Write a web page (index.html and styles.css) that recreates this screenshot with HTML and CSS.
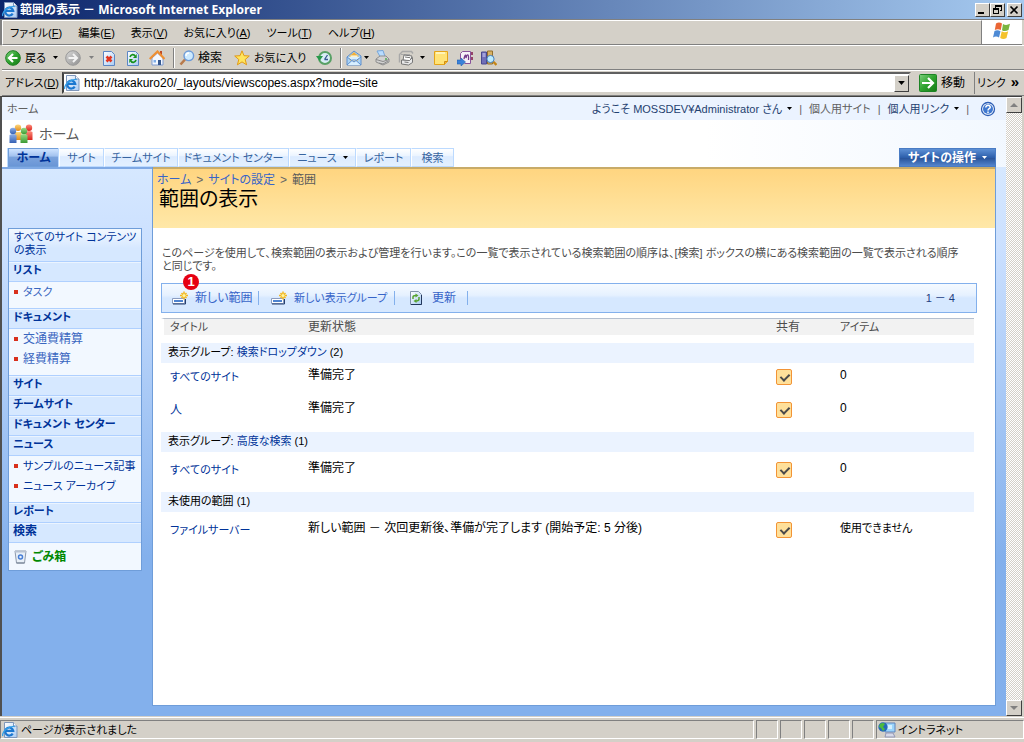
FILE: index.html
```html
<!DOCTYPE html>
<html lang="ja">
<head>
<meta charset="utf-8">
<title>範囲の表示 - Microsoft Internet Explorer</title>
<link rel="stylesheet" href="styles.css">
</head>
<body>
<svg class="defs" aria-hidden="true">
  <defs>
    <linearGradient id="gGreen" x1="0" y1="0" x2="1" y2="1"><stop offset="0" stop-color="#7fd07f"/><stop offset=".5" stop-color="#2ea32e"/><stop offset="1" stop-color="#167a16"/></linearGradient>
    <linearGradient id="gGray" x1="0" y1="0" x2="1" y2="1"><stop offset="0" stop-color="#d8d8d8"/><stop offset="1" stop-color="#8f8f8f"/></linearGradient>
    <linearGradient id="gPage" x1="0" y1="0" x2="1" y2="1"><stop offset="0" stop-color="#ffffff"/><stop offset="1" stop-color="#a9cbf3"/></linearGradient>
    <linearGradient id="gRed" x1="0" y1="0" x2="0" y2="1"><stop offset="0" stop-color="#ff8d7c"/><stop offset="1" stop-color="#d8231c"/></linearGradient>
    <linearGradient id="gBlue" x1="0" y1="0" x2="0" y2="1"><stop offset="0" stop-color="#8fb1ea"/><stop offset="1" stop-color="#3560b3"/></linearGradient>
    <linearGradient id="gOrange" x1="0" y1="0" x2="0" y2="1"><stop offset="0" stop-color="#ffd77a"/><stop offset="1" stop-color="#e08a1c"/></linearGradient>
    <linearGradient id="gLeaf" x1="0" y1="0" x2="0" y2="1"><stop offset="0" stop-color="#9bdc83"/><stop offset="1" stop-color="#3a9a35"/></linearGradient>
  </defs>
  <symbol id="i-ie" viewBox="0 0 16 16">
    <path d="M2.500.5h9l3.500 3.500v11.500h-12.500z" fill="url(#gPage)" stroke="#7f97bb"/>
    <path d="M11.500.5v3.500h3.500" fill="#fff" stroke="#7f97bb"/>
    <path d="M10.700 11.600A4 4 0 1 1 11.200 8.800H4" fill="none" stroke="#1c78d0" stroke-width="2.200"/>
    <path d="M.8 14C-.5 10 6 4 12.800 4.500" fill="none" stroke="#35a0e8" stroke-width="1.300"/>
  </symbol>
  <symbol id="i-back" viewBox="0 0 16 16">
    <circle cx="8" cy="8" r="7.300" fill="url(#gGreen)" stroke="#1d7d22"/>
    <path d="M12.500 8H4.500M8 4 4 8l4 4" fill="none" stroke="#fff" stroke-width="2.200"/>
  </symbol>
  <symbol id="i-fwd" viewBox="0 0 16 16">
    <circle cx="8" cy="8" r="7.300" fill="url(#gGray)" stroke="#999"/>
    <path d="M3.500 8h8M8 4l4 4-4 4" fill="none" stroke="#f3f3f3" stroke-width="2"/>
  </symbol>
  <symbol id="i-stop" viewBox="0 0 16 16">
    <path d="M2.500 1.500h8l3 3v11h-11z" fill="url(#gPage)" stroke="#5b86c4"/>
    <path d="m5.500 6.500 5 5m0-5-5 5" stroke="#e2351f" stroke-width="2.600"/>
  </symbol>
  <symbol id="i-refresh" viewBox="0 0 16 16">
    <path d="M2.500 1.500h8l3 3v11h-11z" fill="url(#gPage)" stroke="#5b86c4"/>
    <path d="M5 7c1-3 4-3 5-1M11 10c-1 3-4 3-5 1" fill="none" stroke="#17921b" stroke-width="1.700"/>
    <path d="M11.700 4v4H8zM4.300 13V9H8z" fill="#17921b"/>
  </symbol>
  <symbol id="i-home" viewBox="0 0 16 16">
    <path d="M11 1h2v5h-2z" fill="#c04a25"/><path d="m3 8 5.500-5L14 8v7H3z" fill="#f4f8ff" stroke="#7e9bd0"/>
    <path d="m.7 9 7.800-7.500L15.500 9" fill="none" stroke="#ef8f32" stroke-width="2.200"/>
    <path d="M9 10h3v5H9z" fill="#36588f"/><path d="M4.500 10h2.500v2.500H4.500z" fill="#7faee8"/>
  </symbol>
  <symbol id="i-search" viewBox="0 0 16 16">
    <path d="m1.500 14.500 4.500-5" stroke="#b87a4c" stroke-width="2.600"/>
    <circle cx="9.800" cy="5.800" r="4.800" fill="#cdeaff" stroke="#6d9bd8" stroke-width="1.400"/>
    <path d="M7 6c0-2 1-3 3-3" stroke="#fff" stroke-width="1.400" fill="none"/>
  </symbol>
  <symbol id="i-star" viewBox="0 0 16 16">
    <path d="m8 .8 2 4.900 5.300.3-4.100 3.500 1.400 5.300L8 11.900l-4.600 2.900 1.400-5.300L.7 6l5.300-.3z" fill="#ffe55c" stroke="#e29a16"/>
  </symbol>
  <symbol id="i-history" viewBox="0 0 16 16">
    <circle cx="9" cy="8" r="6" fill="#d9edf6" stroke="#58a065" stroke-width="2"/>
    <path d="M8.500 9.500 11.500 5M8.500 9.500h3.500" stroke="#36588f" stroke-width="1.300" fill="none"/>
    <path d="M0 6h7l-3.500 5z" fill="#27994a"/>
  </symbol>
  <symbol id="i-mail" viewBox="0 0 16 16">
    <path d="m1 7 7-6 7 5v9H1z" fill="#a9d3f6" stroke="#5f8fcd"/><path d="M4 5h8v5l-4 2-4-2z" fill="#fff3ca" stroke="#d3a74f" stroke-width=".7"/>
    <path d="m5 5 3-3 3 3z" fill="#f2ae37"/><path d="m1 15 5.500-5h3L15 15M1 7l7 5 7-5" fill="#d8efff" stroke="#5f8fcd"/>
  </symbol>
  <symbol id="i-print" viewBox="0 0 16 16">
    <path d="m3 1 6-.5 2 6H6z" fill="#b8dcff" stroke="#76a5d9"/><path d="m2 9 4-3h6l3 3v3l-6 3-7-3z" fill="#d2d2d2" stroke="#8f8f8f"/>
    <path d="m2 9.500 7 2 6-2M5 13l4 1 5-3" fill="none" stroke="#8a8a8a"/><circle cx="12" cy="9" r="1" fill="#55aa53"/>
  </symbol>
  <symbol id="i-edit" viewBox="0 0 16 16">
    <path d="M1.500 12.500v-8l3-3h9l1.500 2" fill="none" stroke="#a8a8a8" stroke-width="1.400"/><path d="M3 4.500h9" stroke="#a8a8a8"/>
    <path d="m6 5 8 1-2 5-7-1z" fill="#fff" stroke="#767676"/><path d="m3.500 10 8 .5 3-3v5l-4 2.500-7-1z" fill="#e8e8e8" stroke="#777"/>
    <path d="m7 7 5 .7M6.500 12l4 .5" stroke="#777"/>
  </symbol>
  <symbol id="i-note" viewBox="0 0 16 16">
    <path d="M1.500 1.500h13v10l-3 3h-10z" fill="#ffe378" stroke="#e5a418"/><path d="M14.500 11.500h-3v3" fill="#f7b52c" stroke="#ce8d15"/>
    <path d="M3 3h9" stroke="#fff4ba" stroke-width="2"/>
  </symbol>
  <symbol id="i-onenote" viewBox="0 0 16 16">
    <path d="M3.500 9.500V3.500l2-2h8v12h-6" fill="#f6f0f8" stroke="#89549b"/><path d="M7 9c1-5 2-5 2-1 1-4 3-5 2.500 2" fill="none" stroke="#72388a" stroke-width="1.300"/>
    <path d="M14 2h2v3h-2zm0 5h2v3h-2z" fill="#944369"/><path d="M0 10h4V8l4.500 4-4.500 4v-2H0z" fill="#3a82da" stroke="#2460ab" stroke-width=".6"/>
  </symbol>
  <symbol id="i-research" viewBox="0 0 16 16">
    <path d="M.5 2h5v12h-5z" fill="#706fb8" stroke="#494890"/><path d="M1.500 4h3m-3 2h3" stroke="#d5d5ff"/><path d="M6.500 1h5v13h-5z" fill="#d9b263" stroke="#936f2d"/>
    <path d="m11.500 11 4 4" stroke="#c58618" stroke-width="2.400"/><circle cx="9.500" cy="9" r="3.600" fill="#bcecff" stroke="#477ebd"/>
  </symbol>
  <symbol id="i-flag" viewBox="0 0 20 18">
    <path d="M4 1.500q3-2 6 0L8.800 8q-3-1.500-6 0z" fill="#ea6635"/><path d="M11 2q3 2 7-.2L16.500 8q-3.500 2-6.500.2z" fill="#7ab540"/>
    <path d="M2.500 9q3-1.500 6 .2L7 15.500q-3-2-6 0z" fill="#4d8ad5"/><path d="M9.700 9.300q3 2 6.500 0L14.500 16q-3 2-6.300 0z" fill="#f4c22d"/>
  </symbol>
  <symbol id="i-go" viewBox="0 0 18 18">
    <rect x=".5" y=".5" width="17" height="17" rx="1" fill="url(#gGreen)" stroke="#1d8425"/><path d="M3 9h10M9 4l5 5-5 5" fill="none" stroke="#fff" stroke-width="2.200"/>
  </symbol>
  <symbol id="i-people" viewBox="0 0 24 20">
    <g><circle cx="9" cy="3.800" r="3.200" fill="url(#gOrange)"/><path d="M5.500 8h7v8h-7z" fill="url(#gOrange)"/></g>
    <g><circle cx="20" cy="3.800" r="3.200" fill="url(#gRed)"/><path d="M16.500 8q3.500-2 7 0v8h-7z" fill="url(#gRed)"/></g>
    <g><circle cx="4" cy="7" r="3.200" fill="url(#gBlue)"/><path d="M.5 11q3.500-2 7 0v8h-7z" fill="url(#gBlue)"/></g>
    <g><circle cx="15" cy="7" r="3.200" fill="url(#gLeaf)"/><path d="M11.500 11q3.500-2 7 0v8h-7z" fill="url(#gLeaf)"/></g>
  </symbol>
  <symbol id="i-help" viewBox="0 0 16 16">
    <circle cx="8" cy="8" r="6.500" fill="#fff" stroke="#2c5db5" stroke-width="1.300"/><circle cx="8" cy="8" r="5" fill="#3f78d0"/>
    <path d="M5.800 6.500c0-3 4.600-2.700 4.400-.2C10 7.800 8 7.700 8 9.500M8 10.600v1.600" fill="none" stroke="#fff" stroke-width="1.500"/>
  </symbol>
  <symbol id="i-new" viewBox="0 0 16 16">
    <path d="M.5 8.500h12v5H.5z" fill="#fff" stroke="#8b9cc0"/><path d="M2 10h9v2H2z" fill="#4d83d0"/><path d="M1 14h12.500v-5" fill="none" stroke="#26406f"/>
    <path d="M12 1.500v8M8 5.500h8M9.500 3l5 5m0-5-5 5" stroke="#f4b81e" stroke-width="1.500"/><circle cx="12" cy="5.500" r="1.600" fill="#fff5a0"/>
  </symbol>
  <symbol id="i-update" viewBox="0 0 12 14">
    <path d="M.5.5h8l3 3v10H.5z" fill="url(#gPage)" stroke="#8293ab"/><path d="M11.500 4v9.500H1" fill="none" stroke="#23385c"/>
    <path d="M3 8V6q0-1.500 3-1.500M9 6v2q0 2-3 2" fill="none" stroke="#57a431" stroke-width="1.500"/><path d="m5.500 2.500 3 2-3 2zm1 5.500-3 2 3 2z" fill="#57a431"/>
  </symbol>
  <symbol id="i-bin" viewBox="0 0 13 14">
    <path d="M1 1h11l-1.500 12h-8z" fill="#e8f0f8" stroke="#8f9aab"/><path d="M1 1h11v1.500H1z" fill="#b8c3d2"/>
    <circle cx="6.500" cy="7" r="2" fill="none" stroke="#477ed6" stroke-width="1.500"/><path d="M2.500 13h8" stroke="#6f7c8f"/>
  </symbol>
  <symbol id="i-net" viewBox="0 0 18 16">
    <path d="M7 1h10v9H7z" fill="#9ad4fb" stroke="#5f83bb"/><path d="M9 3h5v4H9z" fill="#d4f1ff"/><path d="M8 11h7l2 4H7z" fill="#d6d9e8" stroke="#9297b5"/>
    <circle cx="5" cy="5" r="4.700" fill="#2469ba"/><path d="M2 2q3-2 5 0L5 5l2 2-2 2-2-3-2-1z" fill="#4dba3d"/>
  </symbol>
  <symbol id="i-down" viewBox="0 0 5 3"><path d="M0 0h5L2.500 3z" fill="currentColor"/></symbol>
</svg>

<header class="titlebar">
  <svg class="ic"><use href="#i-ie"/></svg>
  <h1 class="title">範囲の表示 － Microsoft Internet Explorer</h1>
  <button class="win" aria-label="最小化"><svg viewBox="0 0 12 10"><path d="M2 7h6v2H2z"/></svg></button>
  <button class="win" aria-label="元に戻す"><svg viewBox="0 0 12 10"><path d="M4 0h7v6H9V5h1V2H5v1H4zM2 3h6v6H2zm1 2v3h4V5z" fill-rule="evenodd"/></svg></button>
  <button class="win close" aria-label="閉じる"><svg viewBox="0 0 12 10"><path d="m2.500 1.500 7 7m0-7-7 7" stroke="#000" stroke-width="1.700"/></svg></button>
</header>

<div class="menurow">
  <nav class="menubar">
    <button>ファイル(<u>F</u>)</button><button>編集(<u>E</u>)</button><button>表示(<u>V</u>)</button><button>お気に入り(<u>A</u>)</button><button>ツール(<u>T</u>)</button><button>ヘルプ(<u>H</u>)</button>
  </nav>
  <div class="flag"><svg><use href="#i-flag"/></svg></div>
</div>

<div class="toolbar">
  <button class="t-back"><svg class="ic"><use href="#i-back"/></svg><span>戻る</span><svg class="dd"><use href="#i-down"/></svg></button>
  <button class="t-fwd" aria-label="進む"><svg class="ic"><use href="#i-fwd"/></svg><svg class="dd"><use href="#i-down"/></svg></button>
  <button class="t-one" aria-label="中止"><svg class="ic"><use href="#i-stop"/></svg></button>
  <button class="t-one" aria-label="更新"><svg class="ic"><use href="#i-refresh"/></svg></button>
  <button class="t-one" aria-label="ホーム"><svg class="ic"><use href="#i-home"/></svg></button>
  <i class="sep"></i>
  <button class="t-search"><svg class="ic"><use href="#i-search"/></svg><span>検索</span></button>
  <button class="t-fav"><svg class="ic"><use href="#i-star"/></svg><span>お気に入り</span></button>
  <button class="t-one" aria-label="履歴"><svg class="ic"><use href="#i-history"/></svg></button>
  <i class="sep"></i>
  <button class="t-mail" aria-label="メール"><svg class="ic"><use href="#i-mail"/></svg><svg class="dd"><use href="#i-down"/></svg></button>
  <button class="t-one" aria-label="印刷"><svg class="ic"><use href="#i-print"/></svg></button>
  <button class="t-edit" aria-label="編集"><svg class="ic"><use href="#i-edit"/></svg><svg class="dd"><use href="#i-down"/></svg></button>
  <button class="t-one" aria-label="ノート"><svg class="ic"><use href="#i-note"/></svg></button>
  <button class="t-one" aria-label="OneNote"><svg class="ic"><use href="#i-onenote"/></svg></button>
  <button class="t-one" aria-label="リサーチ"><svg class="ic"><use href="#i-research"/></svg></button>
</div>

<form class="address">
  <label for="url">アドレス(<u>D</u>)</label>
  <div class="field">
    <svg class="ic"><use href="#i-ie"/></svg>
    <input id="url" type="text" value="http://takakuro20/_layouts/viewscopes.aspx?mode=site">
    <button type="button" class="drop" aria-label="履歴を開く"><svg class="dd"><use href="#i-down"/></svg></button>
  </div>
  <button type="button" class="go"><svg><use href="#i-go"/></svg><span>移動</span></button>
  <button type="button" class="links"><span>リンク</span><b>»</b></button>
</form>

<div class="viewport">
  <div class="page">
    <div class="global">
      <a href="#" class="crumb">ホーム</a>
      <a href="#" class="user">ようこそ MOSSDEV¥Administrator さん<svg class="dd"><use href="#i-down"/></svg></a>
      <i>|</i><a href="#" class="dim">個人用サイト</a><i>|</i>
      <a href="#" class="mylinks">個人用リンク<svg class="dd"><use href="#i-down"/></svg></a><i>|</i>
      <a href="#" class="help" aria-label="ヘルプ"><svg class="ic"><use href="#i-help"/></svg></a>
    </div>
    <div class="sitename"><svg><use href="#i-people"/></svg><a href="#">ホーム</a></div>
    <div class="tabrow">
      <nav class="tabs">
        <a href="#" class="on">ホーム</a><a href="#">サイト</a><a href="#">チームサイト</a><a href="#">ドキュメント センター</a><a href="#" class="has">ニュース<svg class="dd"><use href="#i-down"/></svg></a><a href="#">レポート</a><a href="#">検索</a>
      </nav>
      <button class="actions">サイトの操作<svg class="dd"><use href="#i-down"/></svg></button>
    </div>
    <div class="body">
      <aside class="side">
        <nav class="quick">
          <a href="#" class="all">すべてのサイト コンテンツ<br>の表示</a>
          <a href="#" class="head">リスト</a>
          <ul><li><a href="#">タスク</a></li></ul>
          <a href="#" class="head">ドキュメント</a>
          <ul class="wide"><li><a href="#">交通費精算</a></li><li><a href="#">経費精算</a></li></ul>
          <a href="#" class="head">サイト</a>
          <a href="#" class="head">チームサイト</a>
          <a href="#" class="head">ドキュメント センター</a>
          <a href="#" class="head">ニュース</a>
          <ul class="deep"><li><a href="#">サンプルのニュース記事</a></li><li><a href="#">ニュース アーカイブ</a></li></ul>
          <a href="#" class="head">レポート</a>
          <a href="#" class="head wide">検索</a>
          <a href="#" class="bin"><svg><use href="#i-bin"/></svg>ごみ箱</a>
        </nav>
      </aside>
      <main class="main">
        <div class="banner">
          <p class="path"><a href="#">ホーム</a><i>&gt;</i><a href="#">サイトの設定</a><i>&gt;</i><span>範囲</span></p>
          <h2>範囲の表示</h2>
        </div>
        <div class="content">
          <p class="desc">このページを使用して、検索範囲の表示および管理を行います。この一覧で表示されている検索範囲の順序は、[検索] ボックスの横にある検索範囲の一覧で表示される順序<br>と同じです。</p>
          <div class="listbar">
            <a href="#" class="new1"><svg class="ic"><use href="#i-new"/></svg>新しい範囲<em class="mark">1</em></a>
            <a href="#" class="new2"><svg class="ic"><use href="#i-new"/></svg>新しい表示グループ</a>
            <a href="#" class="upd"><svg class="up"><use href="#i-update"/></svg>更新</a>
            <span class="range">1 － 4</span>
          </div>
          <table class="scopes">
            <thead><tr><th class="c1">タイトル</th><th class="c2">更新状態</th><th class="c3">共有</th><th class="c4">アイテム</th></tr></thead>
            <tbody>
              <tr class="group"><td colspan="4">表示グループ: <a href="#">検索ドロップダウン</a> (2)</td></tr>
              <tr class="first"><td><a href="#">すべてのサイト</a></td><td class="c2">準備完了</td><td><input type="checkbox" checked aria-label="共有"></td><td class="c2">0</td></tr>
              <tr class="second"><td class="c2"><a href="#">人</a></td><td class="c2">準備完了</td><td><input type="checkbox" checked aria-label="共有"></td><td class="c2">0</td></tr>
              <tr class="group"><td colspan="4">表示グループ: <a href="#">高度な検索</a> (1)</td></tr>
              <tr><td><a href="#">すべてのサイト</a></td><td class="c2">準備完了</td><td><input type="checkbox" checked aria-label="共有"></td><td class="c2">0</td></tr>
              <tr class="group"><td colspan="4">未使用の範囲 (1)</td></tr>
              <tr><td><a href="#">ファイルサーバー</a></td><td class="c2">新しい範囲 － 次回更新後、準備が完了します (開始予定: 5 分後)</td><td><input type="checkbox" checked aria-label="共有"></td><td>使用できません</td></tr>
            </tbody>
          </table>
        </div>
      </main>
    </div>
  </div>
  <div class="scroll">
    <button aria-label="上へ"><svg viewBox="0 0 8 4"><path d="M0 4h8L4 0z"/></svg></button>
    <button aria-label="下へ"><svg viewBox="0 0 8 4"><path d="M0 0h8L4 4z"/></svg></button>
  </div>
</div>

<footer class="status">
  <div class="msg"><svg class="ic"><use href="#i-ie"/></svg>ページが表示されました</div>
  <div class="cell"></div><div class="cell"></div><div class="cell"></div><div class="cell"></div><div class="cell"></div>
  <div class="zone"><svg><use href="#i-net"/></svg>イントラネット</div>
</footer>
</body>
</html>
```
FILE: styles.css
```css
* { box-sizing: border-box; }
html, body { margin: 0; height: 100%; }
body {
  display: flex; flex-direction: column; min-height: 100vh;
  background: #d4d0c8; color: #000; overflow: hidden;
  font: 11px/14px "Liberation Sans", "Noto Sans CJK JP", sans-serif;
  font-feature-settings: "palt";
  white-space: nowrap;
}
button { font: inherit; font-feature-settings: inherit; color: inherit; background: none; border: 0; padding: 0; margin: 0; }
a { text-decoration: none; color: #003399; }
p, h1, h2, ul { margin: 0; padding: 0; font-weight: normal; }
ul { list-style: none; }
svg { display: block; flex: none; }
.defs { position: absolute; width: 0; height: 0; }
.ic { width: 16px; height: 16px; }
.dd { width: 5px; height: 3px; }

/* window frame */
.titlebar { flex: none; height: 19px; padding: 0 2px; display: flex; align-items: center; background: linear-gradient(90deg, #0a246a, #a6caf0); color: #fff; }
.title { flex: 1; margin-left: 2px; font: bold 12px/14px "Open Sans", "Noto Sans CJK JP", sans-serif; }
.win { width: 15px; height: 14px; background: #d4d0c8; border: 1px solid; border-color: #fff #404040 #404040 #fff; }
.win svg { width: 12px; height: 10px; }
.win.close { margin-left: 2px; }

.menurow { flex: none; height: 26px; display: flex; border-top: 1px solid #808080; border-left: 2px solid #808080; }
.menubar { flex: 1; display: flex; align-items: center; gap: 16px; padding-left: 7px; border: 1px solid; border-color: #fff #808080 #808080 #fff; }
.flag { width: 40px; margin-right: 2px; padding: 2px 10px; background: #fff; border-bottom: 1px solid #808080; }
.flag svg { width: 20px; height: 18px; }

.toolbar { flex: none; height: 25px; display: flex; align-items: center; margin-left: 2px; padding-left: 3px; border-top: 1px solid #fff; border-bottom: 1px solid #808080; }
.toolbar button { display: flex; align-items: center; }
.t-back { width: 60px; gap: 4px; }
.t-back .dd { margin-left: 3px; }
.t-fwd { width: 36px; gap: 8px; color: #808080; }
.t-one { width: 24px; }
.sep { width: 2px; height: 20px; background: #808080; border-right: 1px solid #fff; margin-right: 4px; }
.toolbar .t-search { width: 55px; gap: 3px; font-size: 12px; }
.t-fav { width: 82px; gap: 4px; }
.t-mail { width: 28px; gap: 2px; }
.t-edit { width: 35px; gap: 6px; }

.address { flex: none; height: 26px; margin: 0 0 0 2px; display: flex; align-items: center; border-top: 1px solid #fff; border-bottom: 1px solid #808080; }
.address label { width: 60px; padding-left: 3px; }
.field { flex: 1; height: 22px; display: flex; align-items: center; background: #fff; border: 2px solid; border-color: #606060 #d4d0c8 #d4d0c8 #404040; }
.field input { flex: 1; min-width: 0; border: 0; outline: 0; background: none; padding: 0 4px; font: inherit; font-size: 12px; }
.drop { width: 15px; height: 17px; display: flex; align-items: center; justify-content: center; background: #d4d0c8; border: 1px solid; border-color: #fff #404040 #404040 #fff; }
.drop .dd { width: 7px; height: 4px; }
.go { display: flex; align-items: center; gap: 4px; width: 64px; height: 22px; padding-left: 8px; font-size: 12px; border-right: 1px solid #808080; }
.go svg { width: 18px; height: 18px; }
.links { display: flex; width: 49px; padding-left: 2px; gap: 5px; }
.links b { font-size: 15px; line-height: 12px; }

/* document */
.viewport { flex: 1; min-height: 0; display: flex; margin-right: 2px; border-left: 2px solid #505050; border-top: 1px solid #404040; }
.page { flex: 1; min-width: 0; display: flex; flex-direction: column; background: #fff; }
.global { flex: none; height: 23px; display: flex; align-items: center; padding: 0 10px 0 5px; background: #ebf3ff; color: #606060; }
.global a { color: #1f3f6f; }
.global .crumb, .global .dim { color: #606060; }
.global .crumb { margin-right: auto; }
.global .dd { color: #000; }
.user, .mylinks { display: flex; align-items: center; gap: 5px; }
.global i { font-style: normal; margin: 0 7px; }
.global .help { margin-left: 4px; }

.sitename { flex: none; height: 28px; display: flex; align-items: center; gap: 6px; padding-left: 7px; background: linear-gradient(90deg, #fff 70%, #f2f8ff); }
.sitename svg { width: 24px; height: 20px; }
.sitename a { font-size: 14px; line-height: 20px; color: #5a5a5a; }

.tabrow { flex: none; height: 19px; display: flex; justify-content: space-between; padding: 0 10px 0 6px; background: linear-gradient(90deg, #fff 70%, #f2f8ff); }
.tabs { display: grid; grid-template-columns: 51px 45px 74px 111px 67px 55px 43px; }
.tabs a { display: flex; align-items: center; justify-content: center; color: #3764a0; border: 1px solid #bcdaff; border-left-color: #fff; box-shadow: -1px 0 #bcdaff; background: linear-gradient(#fff, #ebf4ff 40%, #dcebff 45%, #e3f0ff); }
.tabs .on { color: #003399; font-size: 12px; font-weight: bold; border-color: #6f9dd9; background: linear-gradient(#cfe3ff, #a5c4f0 40%, #7aa2dc 50%, #6a96d6); }
.tabs .has { gap: 6px; }
.tabs .dd { color: #000; }
.actions { width: 97px; display: flex; align-items: center; justify-content: center; gap: 6px; color: #fff; font-weight: bold; font-size: 12px; border: 1px solid #4a7cc4; background: linear-gradient(#5d90d5, #2d5fab 50%, #2a559b 55%, #5485cd); }

.body { flex: 1; display: flex; padding: 0 10px 10px 0; background: linear-gradient(#d6e8ff, #cbe0ff 80px, #83b0ec 390px); }
.side { flex: none; width: 150px; padding: 59px 0 0 6px; border-top: 2px solid #7fa9e4; }
.quick { width: 134px; border: 1px solid #6f9dd9; background: #f2f8ff; }
.quick a { color: #003399; }
.quick .all { display: block; height: 32px; padding: 2px 0 0 5px; line-height: 13px; background: linear-gradient(#f2f8ff, #d6e8ff 60%); }
.quick .head { display: block; height: 20px; line-height: 17px; padding-left: 4px; font-weight: bold; background: #d6e8ff; border-top: 1px solid #afd0ff; box-shadow: inset 0 1px #ebf4ff; }
.quick ul { padding-bottom: 7px; border-top: 1px solid #afd0ff; margin-bottom: -1px; }
.quick li { height: 20px; display: flex; align-items: center; gap: 5px; padding-left: 5px; }
.quick li::before { content: ""; flex: none; width: 4px; height: 4px; background: #d8301c; }
.quick li a { color: #3966bf; }
.quick .wide { font-size: 12px; }
.quick .deep a { color: #003399; }
.quick .bin { height: 28px; display: flex; align-items: center; gap: 5px; padding-left: 5px; font-size: 12px; color: #008800; font-weight: bold; border-top: 1px solid #afd0ff; }
.bin svg { width: 13px; height: 14px; }

.main { flex: 1; min-width: 0; border: 1px solid #6f9dd9; border-top: 0; background: #fff; }
.banner { height: 61px; padding: 4px 4px 0; border-top: 2px solid #c8ab68; background: linear-gradient(#ffd580, #ffe8a8); }
.path { display: flex; gap: 5px; font-size: 12px; color: #666; }
.path i { font-style: normal; }
.path a { color: #3764c8; }
.path span { color: #5a5a5a; }
.banner h2 { font-size: 20px; line-height: 24px; padding-left: 2px; }
.content { padding: 19px 18px 0 8px; }
.desc { line-height: 13px; color: #4c4c4c; padding-left: 1px; }
.listbar { margin-top: 10px; height: 30px; display: flex; align-items: center; border: 1px solid #83b0ec; background: linear-gradient(#f5faff, #e6f1ff 40%, #d6e8ff 50%, #d6e8ff); }
.listbar a { position: relative; display: flex; align-items: center; height: 14px; color: #3764c8; border-right: 1px solid #83b0ec; }
.listbar .new1, .listbar .upd { font-size: 12px; }
.new1 { width: 97px; padding-left: 10px; gap: 7px; }
.new2 { width: 136px; padding-left: 12px; gap: 7px; }
.upd { width: 73px; padding-left: 15px; gap: 10px; }
.up { width: 12px; height: 14px; }
.range { margin-left: auto; padding-right: 21px; color: #1f3f7f; }
.mark { position: absolute; left: 21px; top: -17px; width: 16px; height: 16px; border-radius: 8px; background: #e60012; color: #fff; font: bold 13px/16px "Liberation Sans", sans-serif; text-align: center; }

.scopes { width: calc(100% - 3px); margin-top: 5px; border-collapse: separate; border-spacing: 0; table-layout: fixed; }
.scopes th, .scopes td { padding: 0; text-align: left; font-weight: normal; vertical-align: top; }
.scopes th { height: 25px; line-height: 16px; color: #4c4c4c; background: #f2f2f2 padding-box; border-top: 1px solid #b4bfcf; border-bottom: 8px solid #fff; }
.scopes .c1 { width: 147px; padding-left: 6px; border-left: 3px solid #fff; }
.scopes .c2 { font-size: 12px; }
.scopes .c3 { width: 64px; font-size: 12px; }
.c4 { width: 134px; }
.scopes td { height: 40px; padding-top: 9px; }
.scopes td:first-child { padding: 11px 0 0 9px; }
.scopes .first td { height: 33px; padding-top: 5px; }
.scopes .second td { height: 36px; padding-top: 5px; }
.scopes .first td:first-child, .scopes .second td:first-child { padding-top: 7px; }
.scopes .group td { height: 20px; line-height: 18px; padding: 0 0 0 7px; background: #ebf3ff; }
.scopes input { appearance: none; display: block; margin: 1px 0 0; width: 16px; height: 16px; border: 1px solid #f29436; border-radius: 2px; background: #ffe09a; }
.scopes input::before { content: ""; display: block; width: 4px; height: 7px; margin: 2px 0 0 5px; border: solid #4a4a4a; border-width: 0 2px 2px 0; transform: rotate(45deg); }

.scroll { flex: none; width: 16px; display: flex; flex-direction: column; justify-content: space-between; background: repeating-conic-gradient(#fff 0 25%, #d4d0c8 0 50%) 0 0 / 2px 2px; }
.scroll button { width: 16px; height: 16px; display: flex; align-items: center; justify-content: center; background: #d4d0c8; border: 1px solid; border-color: #fff #404040 #404040 #fff; }
.scroll svg { width: 8px; height: 4px; fill: #808080; }

.status { flex: none; height: 26px; display: flex; gap: 2px; padding: 4px 0 3px; background: linear-gradient(#d4d0c8 1px, #fff 1px, #fff 2px, #d4d0c8 2px); }
.status div { height: 19px; border: 1px solid; border-color: #808080 #fff #fff #808080; }
.msg { flex: 1; display: flex; align-items: center; gap: 3px; padding-left: 1px; }
.cell { width: 22px; }
.zone { width: 148px; display: flex; align-items: center; gap: 2px; padding-left: 1px; }
.zone svg { width: 18px; height: 16px; }
```
